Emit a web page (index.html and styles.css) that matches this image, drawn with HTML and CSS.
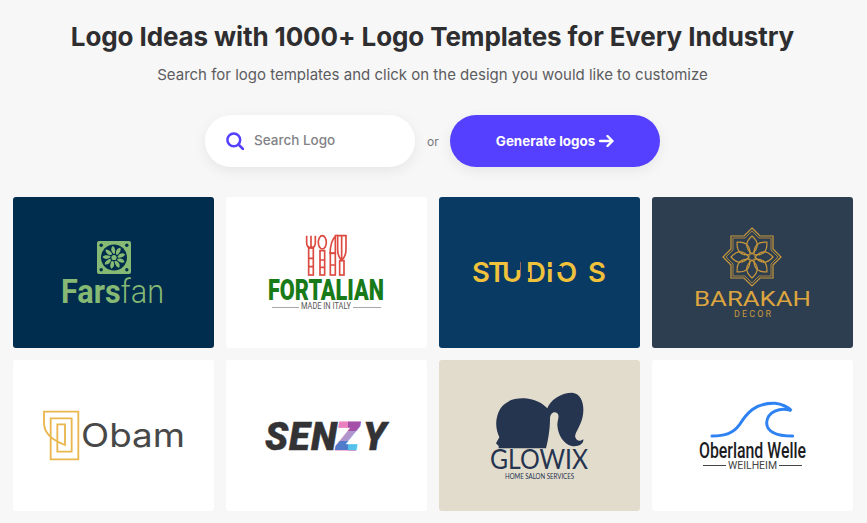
FILE: index.html
```html
<!DOCTYPE html>
<html lang="en">
<head>
<meta charset="utf-8">
<title>Logo Ideas</title>
<link rel="stylesheet" href="styles.css">
</head>
<body>
<main class="page">
  <header class="intro">
    <h1 class="title">Logo Ideas with 1000+ Logo Templates for Every Industry</h1>
    <p class="subtitle">Search for logo templates and click on the design you would like to customize</p>
  </header>
  <div class="actions">
    <label class="search">
      <svg class="search-icon" viewBox="0 0 18 18"><circle cx="7.800" cy="7.800" r="6.400"/><path d="M12.500 12.500 17 17"/></svg>
      <span class="search-text">Search Logo</span>
    </label>
    <span class="or">or</span>
    <a class="generate">Generate logos
      <svg class="arrow" viewBox="0 0 15 12"><path d="M1 6h12.500M8.500 1l5 5-5 5"/></svg>
    </a>
  </div>
  <section class="grid">
    <article class="card bg-navy">
      <svg viewBox="0 0 201 151">
        <g transform="translate(101 60.500)">
          <rect x="-17" y="-16.500" width="34" height="33" rx="2" fill="#86ba74"/>
          <g fill="#002d4d"><circle cx="-12.800" cy="-12.300" r="1.700"/><circle cx="12.800" cy="-12.300" r="1.700"/><circle cx="-12.800" cy="12.300" r="1.700"/><circle cx="12.800" cy="12.300" r="1.700"/><circle r="13"/></g>
          <g fill="#86ba74">
            <circle r="2.600"/>
            <path id="b" d="M-.6-3.800C-3-6-3.600-9-1.400-11.400C1-10.600 1.600-6.800 .8-3.800Z"/>
            <use href="#b" transform="rotate(40)"/><use href="#b" transform="rotate(80)"/><use href="#b" transform="rotate(120)"/><use href="#b" transform="rotate(160)"/><use href="#b" transform="rotate(200)"/><use href="#b" transform="rotate(240)"/><use href="#b" transform="rotate(280)"/><use href="#b" transform="rotate(320)"/>
          </g>
        </g>
        <text class="t-fars" x="48" y="106" textLength="103" lengthAdjust="spacingAndGlyphs">Fars<tspan class="t-fan">fan</tspan></text>
      </svg>
    </article>
    <article class="card">
      <svg viewBox="0 0 201 151">
        <g transform="translate(-1 13) scale(.3333)" fill="none" stroke="#dc4a40" stroke-width="5">
          <path d="M245 77v22q0 14 13 14t13-14V77M258 77v36"/><rect x="251" y="114" width="14" height="81"/><path d="M251 145h14M251 170h14"/>
          <ellipse cx="292" cy="97" rx="12" ry="20"/><rect x="285" y="122" width="14" height="73"/><path d="M285 150h14M285 172h14"/>
          <path d="M333 77q-16 14-18 52h16V77Z"/><rect x="316" y="130" width="15" height="65"/><path d="M316 165h15"/>
          <path d="M338 77v42q0 20 12 32q13-12 13-32V77ZM350 77v74"/><rect x="344" y="152" width="13" height="43"/>
        </g>
        <text class="t-fort" x="42" y="103" textLength="116" lengthAdjust="spacingAndGlyphs">FORTALIAN</text>
        <text class="t-made" x="75" y="112" textLength="50" lengthAdjust="spacingAndGlyphs">MADE IN ITALY</text>
        <path d="M46 110.500h27M127 110.500h28" stroke="#a8a8a8" stroke-width="1"/>
      </svg>
    </article>
    <article class="card bg-blue">
      <svg viewBox="0 0 201 151">
        <text class="t-studio" x="33 49 63 87 107 117 140 149" y="85">STUDIO S</text>
        <g fill="#083a63">
          <rect x="76" y="64" width="5" height="9"/>
          <rect x="86" y="75" width="5" height="6"/>
          <rect x="106" y="70" width="9" height="2"/>
          <rect x="116" y="69" width="7" height="6"/>
        </g>
      </svg>
    </article>
    <article class="card bg-slate">
      <svg viewBox="0 0 201 151">
        <g transform="translate(100 60)" fill="none" stroke="#c9983c" stroke-width="1.200">
          <path d="M0-29 8-21H21V-8L29 0 21 8V21H8L0 29-8 21H-21V8L-29 0-21-8V-21H-8Z"/>
          <path d="M0-26 7-19H19V-7L26 0 19 7V19H7L0 26-7 19H-19V7L-26 0-19-7V-19H-7Z" stroke-width=".8"/>
          <path id="p" d="M0-3C-7-9-7-15 0-21C7-15 7-9 0-3Z"/>
          <use href="#p" transform="rotate(45)"/><use href="#p" transform="rotate(90)"/><use href="#p" transform="rotate(135)"/><use href="#p" transform="rotate(180)"/><use href="#p" transform="rotate(225)"/><use href="#p" transform="rotate(270)"/><use href="#p" transform="rotate(315)"/>
        </g>
        <text class="t-bar" x="42" y="109" textLength="117" lengthAdjust="spacingAndGlyphs">BARAKAH</text>
        <text class="t-decor" x="82" y="120" textLength="37">DECOR</text>
      </svg>
    </article>
    <article class="card">
      <svg viewBox="0 0 201 151">
        <g transform="translate(7 30) scale(.3333)" fill="none" stroke="#eab64e" stroke-width="5.500">
          <path d="M135 165C95 150 72 130 72 100V65H175V208H92V85H155V185H112V103H135Z"/>
        </g>
        <text class="t-obam" x="68" y="87" textLength="104" lengthAdjust="spacingAndGlyphs">Obam</text>
      </svg>
    </article>
    <article class="card">
      <svg viewBox="0 0 201 151">
        <defs>
          <pattern id="zfill" patternUnits="userSpaceOnUse" width="60" height="30" x="100" y="60">
            <rect width="22" height="11" fill="#ea80bf"/><rect x="22" width="38" height="11" fill="#a54fa8"/>
            <rect y="11" width="60" height="10" fill="#b095cd"/>
            <rect y="21" width="22" height="9" fill="#4f7bca"/><rect x="22" y="21" width="38" height="9" fill="#55c1ea"/>
          </pattern>
        </defs>
        <text class="t-senzy" x="39 63 85 110 137" y="89.500">SEN<tspan class="t-z">Z</tspan>Y</text>
      </svg>
    </article>
    <article class="card bg-sand">
      <svg viewBox="0 0 201 151">
        <g transform="translate(31 20) scale(.3333)">
          <path fill="#25344f" d="M86 205V198L78 190 88 172C78 150 74 125 86 95C100 65 130 53 165 55C195 57 218 70 232 85C240 62 270 38 308 38C335 42 345 75 338 110C332 140 312 160 316 172C322 186 332 184 340 178C342 192 325 201 305 198C280 192 264 165 262 135C262 120 270 108 262 100C252 92 240 100 240 118C240 145 235 180 228 205Z"/>
        </g>
        <text class="t-glow" x="51" y="109" textLength="98" lengthAdjust="spacingAndGlyphs">GLOWIX</text>
        <text class="t-home" x="66" y="118.500" textLength="69" lengthAdjust="spacingAndGlyphs">HOME SALON SERVICES</text>
      </svg>
    </article>
    <article class="card">
      <svg viewBox="0 0 201 151">
        <g transform="translate(28 30) scale(.3333)" fill="none" stroke="#2f82f2" stroke-width="9" stroke-linecap="round">
          <path d="M96 138C135 138 160 130 178 105C200 70 225 38 285 40C305 42 322 50 334 62C300 50 262 65 260 98C260 122 285 138 338 138"/>
        </g>
        <text class="t-ober" x="47" y="98" textLength="107" lengthAdjust="spacingAndGlyphs">Oberland Welle</text>
        <text class="t-weil" x="76" y="109" textLength="49" lengthAdjust="spacingAndGlyphs">WEILHEIM</text>
        <path d="M51 105.500h23M127 105.500h23" stroke="#444" stroke-width="1"/>
      </svg>
    </article>
  </section>
</main>
</body>
</html>
```
FILE: styles.css
```css
* { box-sizing: border-box; }
html, body { margin: 0; padding: 0; }
body {
  background: #f7f7f7;
  font-family: Inter, "Liberation Sans", sans-serif;
  color: #2f2f33;
}
.page { padding: 20px 15px 12px 13px; }
.intro { text-align: center; }
.title {
  margin: 0;
  font-size: 26px;
  letter-spacing: -.11px;
  line-height: 34px;
  font-weight: 700;
  color: #2e2e30;
}
.subtitle {
  margin: 10px 0 0;
  font-size: 15px;
  line-height: 22px;
  font-weight: 400;
  color: #5c5c60;
}
.actions {
  margin-top: 29px;
  display: flex;
  justify-content: center;
  align-items: center;
  gap: 12px;
}
.search, .generate {
  width: 210px;
  height: 52px;
  border-radius: 26px;
  display: flex;
  align-items: center;
  box-shadow: 0 4px 14px rgba(0, 0, 0, .07);
}
.search { background: #fff; padding-left: 21px; gap: 10px; }
.search-icon { width: 18px; height: 18px; fill: none; stroke: #5540ff; stroke-width: 2.500; stroke-linecap: round; }
.search-text { font-size: 13.500px; font-weight: 500; color: #828286; padding-bottom: 2px; }
.or { font-size: 12px; color: #77777b; width: 11px; text-align: center; }
.generate {
  background: #5540ff;
  color: #fff;
  font-size: 13.400px;
  font-weight: 700;
  justify-content: center;
  gap: 4px;
}
.arrow { width: 15px; height: 12px; fill: none; stroke: #fff; stroke-width: 2.400; stroke-linecap: round; stroke-linejoin: round; }
.grid {
  margin-top: 30px;
  display: grid;
  grid-template-columns: repeat(4, 201px);
  grid-auto-rows: 151px;
  gap: 12px;
}
.card { background: #fff; border-radius: 3px; overflow: hidden; }
.card svg { display: block; width: 201px; height: 151px; }
.bg-navy { background: #002d4d; }
.bg-blue { background: #083a63; }
.bg-slate { background: #2d3e50; }
.bg-sand { background: #e2dccd; }
.t-fars { font-family: Roboto, sans-serif; font-weight: 700; font-size: 34px; fill: #86ba74; }
.t-fan { font-weight: 300; }
.t-fort { font-family: Roboto, sans-serif; font-weight: 900; font-size: 29px; fill: #187a18; }
.t-made { font-family: Roboto, sans-serif; font-size: 8.500px; fill: #555; }
.t-studio { font-family: Inter, sans-serif; font-weight: 600; font-size: 27.500px; fill: #f0c23c; }
.t-bar { font-family: Roboto, sans-serif; font-weight: 400; font-size: 20px; fill: #dca53f; }
.t-decor { font-family: Roboto, sans-serif; font-size: 9px; fill: #c9983c; }
.t-obam { font-family: Inter, sans-serif; font-weight: 400; font-size: 33px; fill: #484848; }
.t-senzy { font-family: Roboto, sans-serif; font-weight: 900; font-style: italic; font-size: 38px; fill: #333336; stroke: #333336; stroke-width: .5px; }
.t-z { fill: url(#zfill); stroke: url(#zfill); stroke-width: 1.200px; }
.t-glow { font-family: Lato, sans-serif; font-weight: 400; font-size: 27px; fill: #25344f; }
.t-home { font-family: Lato, sans-serif; font-size: 7.500px; fill: #25344f; }
.t-ober { font-family: Roboto, sans-serif; font-weight: 500; font-size: 22px; fill: #1d1d1f; }
.t-weil { font-family: Roboto, sans-serif; font-size: 10px; fill: #444; }
```
